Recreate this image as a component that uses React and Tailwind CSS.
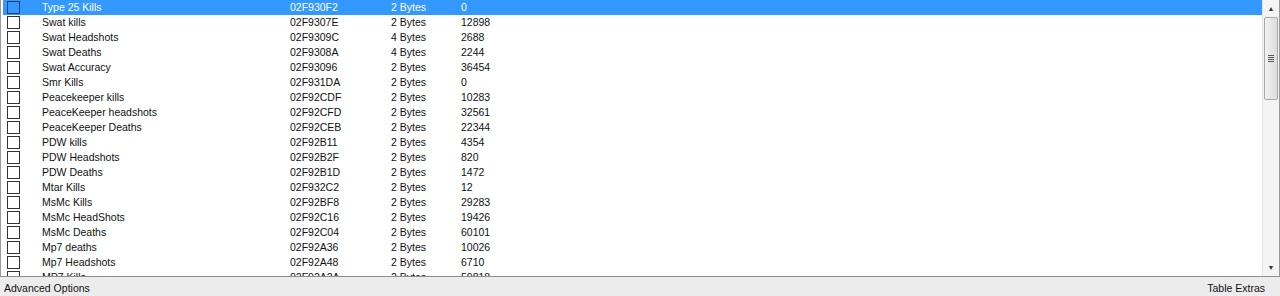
const rows = [
  ['Type 25 Kills', '02F930F2', '2 Bytes', '0'],
  ['Swat kills', '02F9307E', '2 Bytes', '12898'],
  ['Swat Headshots', '02F9309C', '4 Bytes', '2688'],
  ['Swat Deaths', '02F9308A', '4 Bytes', '2244'],
  ['Swat Accuracy', '02F93096', '2 Bytes', '36454'],
  ['Smr Kills', '02F931DA', '2 Bytes', '0'],
  ['Peacekeeper kills', '02F92CDF', '2 Bytes', '10283'],
  ['PeaceKeeper headshots', '02F92CFD', '2 Bytes', '32561'],
  ['PeaceKeeper Deaths', '02F92CEB', '2 Bytes', '22344'],
  ['PDW kills', '02F92B11', '2 Bytes', '4354'],
  ['PDW Headshots', '02F92B2F', '2 Bytes', '820'],
  ['PDW Deaths', '02F92B1D', '2 Bytes', '1472'],
  ['Mtar Kills', '02F932C2', '2 Bytes', '12'],
  ['MsMc Kills', '02F92BF8', '2 Bytes', '29283'],
  ['MsMc HeadShots', '02F92C16', '2 Bytes', '19426'],
  ['MsMc Deaths', '02F92C04', '2 Bytes', '60101'],
  ['Mp7 deaths', '02F92A36', '2 Bytes', '10026'],
  ['Mp7 Headshots', '02F92A48', '2 Bytes', '6710'],
  ['MP7 Kills', '02F92A2A', '2 Bytes', '59818'],
];

function Row({ desc, addr, type, value, selected }) {
  return (
    <div
      className={`flex items-center h-[15px] shrink-0 ${
        selected ? 'bg-[#3399ff] text-white' : 'text-[#111]'
      }`}
    >
      <div className="w-[39px] pl-[4px] flex items-center">
        <span
          className={`block w-[13px] h-[13px] border ${
            selected ? 'border-[#1f3f6f]' : 'border-[#333] bg-white'
          }`}
        />
      </div>
      <div className="w-[248px] whitespace-nowrap">{desc}</div>
      <div className="w-[101px] whitespace-nowrap">{addr}</div>
      <div className="w-[70px] whitespace-nowrap">{type}</div>
      <div className="whitespace-nowrap">{value}</div>
    </div>
  );
}

function Scrollbar() {
  return (
    <div className="w-[17px] flex flex-col bg-[#f4f4f4] border-l border-[#e6e6e6]">
      <div className="h-[17px] flex items-center justify-center text-[7px] text-[#333]">▲</div>
      <div className="mx-[1px] h-[83px] rounded-[2px] border border-[#a9a9a9] bg-gradient-to-r from-[#f2f2f2] to-[#dcdcdc] flex flex-col items-center justify-center gap-[1px]">
        <span className="block w-[6px] h-[1px] bg-[#555]" />
        <span className="block w-[6px] h-[1px] bg-[#555]" />
        <span className="block w-[6px] h-[1px] bg-[#555]" />
        <span className="block w-[6px] h-[1px] bg-[#555]" />
      </div>
      <div className="flex-1" />
      <div className="h-[17px] flex items-center justify-center text-[7px] text-[#333]">▼</div>
    </div>
  );
}

export default function App() {
  return (
    <div
      className="w-[1280px] h-[296px] flex flex-col bg-white text-[10.5px] leading-[15px]"
      style={{ fontFamily: '"Liberation Sans", Arial, sans-serif' }}
    >
      <div className="h-[276px] flex border-l border-r border-[#9a9a9a] pl-[2px]">
        <div className="flex-1 flex flex-col overflow-hidden">
          {rows.map((r, i) => (
            <Row key={i} desc={r[0]} addr={r[1]} type={r[2]} value={r[3]} selected={i === 0} />
          ))}
        </div>
        <Scrollbar />
      </div>
      <div className="flex-1 flex items-center justify-between border-t border-[#8e8e8e] bg-[#ececec] pl-[4px] pr-[15px] pt-[3px] text-[#111]">
        <span>Advanced Options</span>
        <span>Table Extras</span>
      </div>
    </div>
  );
}
